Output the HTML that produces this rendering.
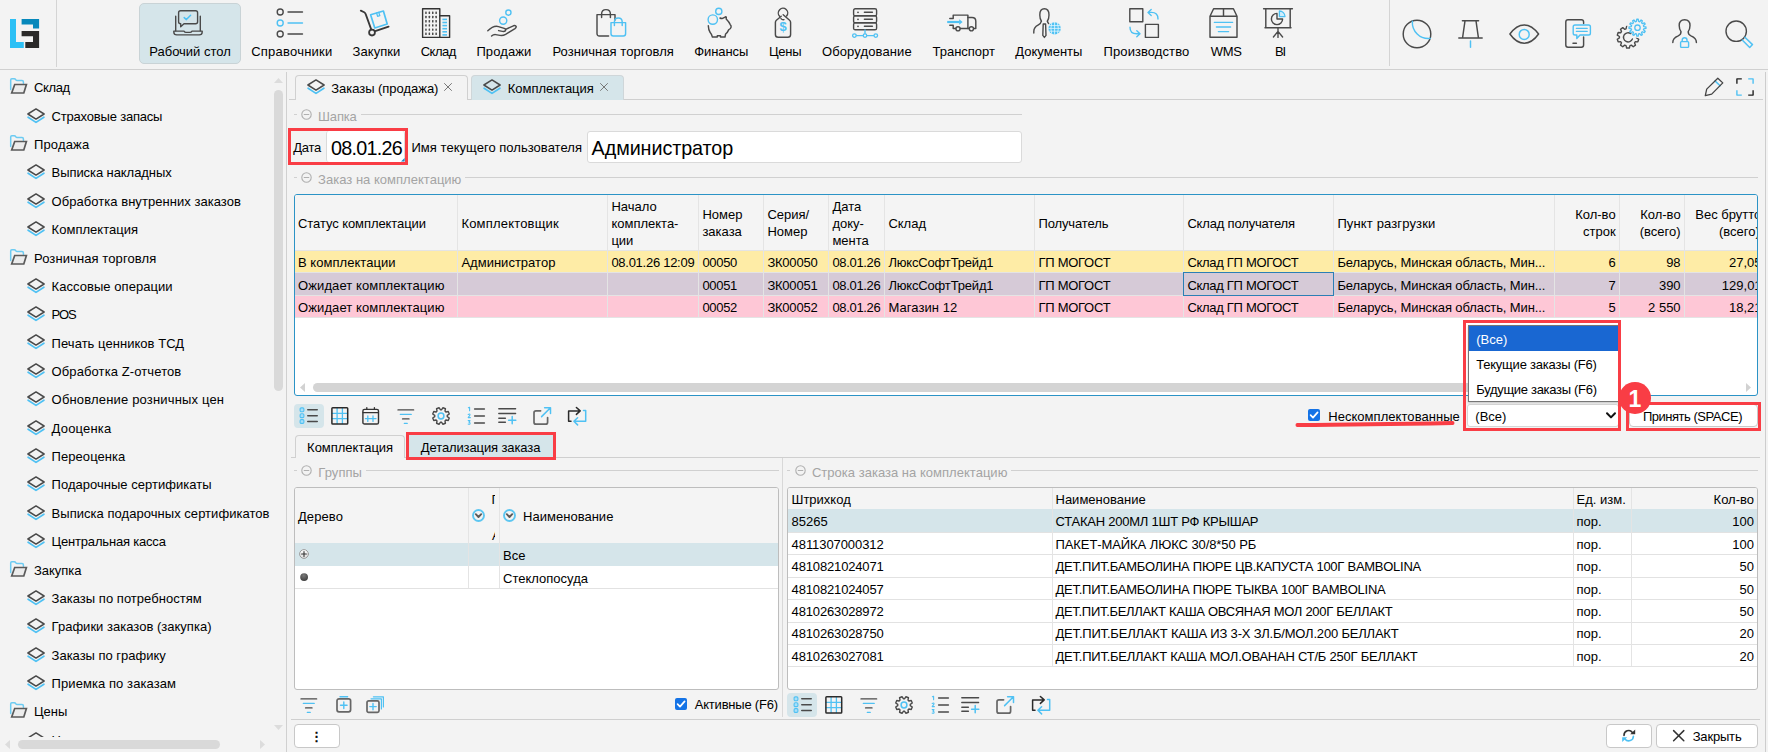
<!DOCTYPE html><html lang="ru"><head><meta charset="utf-8"><title>Комплектация</title><style>
*{box-sizing:border-box;margin:0;padding:0}
html,body{width:1768px;height:752px;overflow:hidden;background:#f3f3f3;}
body{position:relative;font-family:"Liberation Sans","DejaVu Sans",sans-serif;font-size:13px;color:#000;line-height:16px}
div,span.t,span.g,span.b{position:absolute}
span.t,span.g,span.b{white-space:nowrap;line-height:16px}
span.g{color:#a4a4a4}
span.b{font-size:19.75px;line-height:24px}
.hl{background:#d0d0d0;height:1px}
.vl{background:#d0d0d0;width:1px}
.btn{background:#fff;border:1px solid #c8c8c8;border-radius:4px}
.cell{overflow:hidden;white-space:nowrap}
</style></head><body>
<svg style="position:absolute;left:10px;top:19px;overflow:visible" width="29" height="29" viewBox="0 0 29 29" fill="none" stroke-linecap="round" stroke-linejoin="round" stroke="none"><path d="M0 0 H6 V22.9 H13.8 V28.9 H0Z" fill="#2cc0f5"/><path d="M11.6 0 H29.1 V9.6 H23 V5.6 H11.6Z" fill="#0688bb"/><path d="M11.6 11.9 H29.1 V28.9 H15.3 V22.9 H23 V17.3 H11.6Z" fill="#2b2a29"/></svg>
<div style="left:56px;top:0px;width:1px;height:67px;background:#d4d4d4"></div>
<div style="left:1389px;top:0px;width:1px;height:66px;background:#d4d4d4"></div>
<div style="left:0px;top:69px;width:1768px;height:1px;background:#d0d0d0"></div>
<div style="left:139px;top:3px;width:102px;height:61px;background:#d5e5ea;border:1px solid #c9d3d6;border-radius:5px"></div>
<svg style="position:absolute;left:173px;top:8px;overflow:visible" width="30" height="30" viewBox="0 0 30 30" fill="none" stroke-linecap="round" stroke-linejoin="round" >
<path d="M7.6 2.8 H22.6 Q24.6 2.8 24.6 4.8 V13.7 Q24.6 15.7 22.6 15.7 H11 L7.7 18.8 V15.7 H7.6 Q5.6 15.7 5.6 13.7 V4.8 Q5.6 2.8 7.6 2.8Z" stroke="#4a4a4a" stroke-width="1.4"/>
<path d="M11.2 9.6 L13.4 11.6 L17.6 7.2" stroke="#4fc1f3" stroke-width="1.5"/>
<path d="M2.7 8.2 V22.8 M27.3 8.2 V22.8" stroke="#4a4a4a" stroke-width="1.4"/>
<path d="M.8 23.1 H11 Q11.8 24.4 13 24.4 H17 Q18.2 24.4 19 23.1 H29.2 V24 Q29.2 26.9 26.2 26.9 H3.8 Q.8 26.9 .8 24Z" stroke="#4a4a4a" stroke-width="1.4"/></svg>
<span class="t" style="letter-spacing:-0.017px;left:149.3px;top:44px;">Рабочий стол</span>
<svg style="position:absolute;left:276px;top:8px;overflow:visible" width="30" height="30" viewBox="0 0 30 30" fill="none" stroke-linecap="round" stroke-linejoin="round" >
<circle cx="4.2" cy="4" r="3" stroke="#4a4a4a" stroke-width="1.4"/><path d="M12 4H26.5" stroke="#4a4a4a" stroke-width="1.4"/>
<circle cx="4.2" cy="15" r="3" stroke="#4fc1f3" stroke-width="1.4"/><path d="M12 15H26.5" stroke="#4fc1f3" stroke-width="1.4"/>
<circle cx="4.2" cy="26" r="3" stroke="#4a4a4a" stroke-width="1.4"/><path d="M12 26H26.5" stroke="#4a4a4a" stroke-width="1.4"/></svg>
<span class="t" style="letter-spacing:0.230px;left:251.2px;top:44px;">Справочники</span>
<svg style="position:absolute;left:359.8px;top:7.6px;overflow:visible" width="30" height="30" viewBox="0 0 30 30" fill="none" stroke-linecap="round" stroke-linejoin="round" >
<path d="M10.6 6.7 L23.4 3 L27.2 16 L14.8 20 Z" stroke="#4fc1f3" stroke-width="1.7"/>
<path d="M16.6 5 L17.6 8.4 L19.8 7.7 L18.8 4.4" stroke="#4fc1f3" stroke-width="1.3"/>
<path d="M.8 2.6 L4.2 4.2 Q5.2 4.7 5.6 5.9 L11.2 21.4" stroke="#383838" stroke-width="1.8"/>
<circle cx="12" cy="24.6" r="2.9" stroke="#383838" stroke-width="1.8"/>
<path d="M15.2 23.2 L28.6 18.6" stroke="#383838" stroke-width="1.8"/></svg>
<span class="t" style="letter-spacing:0.071px;left:352.5px;top:44px;">Закупки</span>
<svg style="position:absolute;left:421px;top:8px;overflow:visible" width="30" height="30" viewBox="0 0 30 30" fill="none" stroke-linecap="round" stroke-linejoin="round" ><rect x="1.6" y=".8" width="17.2" height="28.6" stroke="#333" stroke-width="1.4"/>
<path d="M18.8 7.8 H28.6 V29.4 H18.8" stroke="#333" stroke-width="1.4"/><rect x="4.2" y="3.6" width="1.5" height="2.4" rx=".5" fill="#4a4a4a"/><rect x="7.6" y="3.6" width="1.5" height="2.4" rx=".5" fill="#4a4a4a"/><rect x="11.0" y="3.6" width="1.5" height="2.4" rx=".5" fill="#4a4a4a"/><rect x="14.4" y="3.6" width="1.5" height="2.4" rx=".5" fill="#4a4a4a"/><rect x="4.2" y="7.8" width="1.5" height="2.4" rx=".5" fill="#4a4a4a"/><rect x="7.6" y="7.8" width="1.5" height="2.4" rx=".5" fill="#4a4a4a"/><rect x="11.0" y="7.8" width="1.5" height="2.4" rx=".5" fill="#4a4a4a"/><rect x="14.4" y="7.8" width="1.5" height="2.4" rx=".5" fill="#4a4a4a"/><rect x="4.2" y="12.0" width="1.5" height="2.4" rx=".5" fill="#4a4a4a"/><rect x="7.6" y="12.0" width="1.5" height="2.4" rx=".5" fill="#4a4a4a"/><rect x="11.0" y="12.0" width="1.5" height="2.4" rx=".5" fill="#4a4a4a"/><rect x="14.4" y="12.0" width="1.5" height="2.4" rx=".5" fill="#4a4a4a"/><rect x="4.2" y="16.2" width="1.5" height="2.4" rx=".5" fill="#4a4a4a"/><rect x="7.6" y="16.2" width="1.5" height="2.4" rx=".5" fill="#4a4a4a"/><rect x="11.0" y="16.2" width="1.5" height="2.4" rx=".5" fill="#4a4a4a"/><rect x="14.4" y="16.2" width="1.5" height="2.4" rx=".5" fill="#4a4a4a"/><rect x="4.2" y="20.4" width="1.5" height="2.4" rx=".5" fill="#4a4a4a"/><rect x="7.6" y="20.4" width="1.5" height="2.4" rx=".5" fill="#4a4a4a"/><rect x="11.0" y="20.4" width="1.5" height="2.4" rx=".5" fill="#4a4a4a"/><rect x="14.4" y="20.4" width="1.5" height="2.4" rx=".5" fill="#4a4a4a"/><rect x="4.2" y="24.6" width="1.5" height="2.4" rx=".5" fill="#4a4a4a"/><rect x="7.6" y="24.6" width="1.5" height="2.4" rx=".5" fill="#4a4a4a"/><rect x="11.0" y="24.6" width="1.5" height="2.4" rx=".5" fill="#4a4a4a"/><rect x="14.4" y="24.6" width="1.5" height="2.4" rx=".5" fill="#4a4a4a"/><path d="M21.4 11.4H26" stroke="#4fc1f3" stroke-width="1.6" stroke-linecap="butt"/><path d="M21.4 14.5H26" stroke="#4fc1f3" stroke-width="1.6" stroke-linecap="butt"/><path d="M21.4 17.6H26" stroke="#4fc1f3" stroke-width="1.6" stroke-linecap="butt"/><path d="M21.4 20.7H26" stroke="#4fc1f3" stroke-width="1.6" stroke-linecap="butt"/><path d="M21.4 23.8H26" stroke="#4fc1f3" stroke-width="1.6" stroke-linecap="butt"/><path d="M21.4 26.9H26" stroke="#4fc1f3" stroke-width="1.6" stroke-linecap="butt"/></svg>
<span class="t" style="letter-spacing:-0.485px;left:420.7px;top:44px;">Склад</span>
<svg style="position:absolute;left:486.8px;top:8px;overflow:visible" width="30" height="30" viewBox="0 0 30 30" fill="none" stroke-linecap="round" stroke-linejoin="round" >
<circle cx="21.4" cy="4.6" r="2.6" stroke="#4fc1f3" stroke-width="1.4"/>
<circle cx="16.2" cy="12.6" r="3.6" stroke="#4fc1f3" stroke-width="1.4"/>
<path d="M.8 22.8 Q6.5 17.2 11.5 18.6 L17.2 20.4 Q19.4 21.2 18.4 22.8 Q17.6 23.8 15.4 23.4 L11.6 22.6" stroke="#4a4a4a" stroke-width="1.45"/>
<path d="M18.6 21.4 L26.4 17.8 Q28.6 17 29.2 18.6 Q29.4 19.6 28 20.6 L18.6 26.4 Q16 27.8 13 27.4 L8.6 26.6 Q6.4 26.4 4.6 28" stroke="#4a4a4a" stroke-width="1.45"/></svg>
<span class="t" style="letter-spacing:0.115px;left:476.4px;top:44px;">Продажи</span>
<svg style="position:absolute;left:596px;top:8px;overflow:visible" width="31" height="30" viewBox="0 0 31 30" fill="none" stroke-linecap="round" stroke-linejoin="round" >
<path d="M12.6 28 H3.4 Q1 28 1 25.6 V6.6 H19 V12" stroke="#4a4a4a" stroke-width="1.45"/>
<path d="M5.6 9.6 V6 Q5.6 1.6 10 1.6 Q14.4 1.6 14.4 6 V9.6" stroke="#4a4a4a" stroke-width="1.45"/>
<path d="M15 14.6 H29.6 V25.8 Q29.6 28 27.4 28 H17.2 Q15 28 15 25.8Z" stroke="#4fc1f3" stroke-width="1.45"/>
<path d="M18.4 17.6 V14 Q18.4 10 22.3 10 Q26.2 10 26.2 14 V17.6" stroke="#4fc1f3" stroke-width="1.45"/></svg>
<span class="t" style="letter-spacing:0.049px;left:552.4px;top:44px;">Розничная торговля</span>
<svg style="position:absolute;left:706.9px;top:8px;overflow:visible" width="28" height="30" viewBox="0 0 28 30" fill="none" stroke-linecap="round" stroke-linejoin="round" >
<circle cx="11.8" cy="3.4" r="3.1" stroke="#4fc1f3" stroke-width="1.4"/>
<circle cx="5.8" cy="11.6" r="4.7" stroke="#4fc1f3" stroke-width="1.4"/>
<path d="M13 10 Q14.4 10.8 15.6 10.4 L18.6 8.8 Q19.4 8.6 19.3 9.6 L19.2 11 Q22.2 14 23.2 16.6 Q24.4 17.6 24.1 19.2 Q23.8 21 21.8 21.6 Q20.6 24.4 18.6 26 L18 29 H13.5 V27.7 H10.3 V29 H5.4 Q4.6 26 3.2 24.6 Q1.4 21.6 1.3 17.7" stroke="#4a4a4a" stroke-width="1.45"/></svg>
<span class="t" style="letter-spacing:-0.097px;left:694.3px;top:44px;">Финансы</span>
<svg style="position:absolute;left:774px;top:8px;overflow:visible" width="18" height="30" viewBox="0 0 18 30" fill="none" stroke-linecap="round" stroke-linejoin="round" >
<path d="M5.6 8.2 A4.7 4.7 0 1 1 12.6 8 M7 10.6 Q8.2 12 10 11.6" stroke="#4a4a4a" stroke-width="1.4"/>
<path d="M9.2 6.8 L15.6 12.2 Q16.6 13 16.6 14.4 V26.4 Q16.6 29.2 13.8 29.2 H4.2 Q1.4 29.2 1.4 26.4 V14.4 Q1.4 13 2.4 12.2 L7.2 8.2" stroke="#4a4a4a" stroke-width="1.45"/>
<text x="9.1" y="23.4" font-size="13" font-weight="bold" text-anchor="middle" fill="#4fc1f3" stroke="none" font-family="Liberation Sans, sans-serif">$</text></svg>
<span class="t" style="letter-spacing:-0.194px;left:768.9px;top:44px;">Цены</span>
<svg style="position:absolute;left:852px;top:8px;overflow:visible" width="27" height="30" viewBox="0 0 27 30" fill="none" stroke-linecap="round" stroke-linejoin="round" ><rect x="1.6" y="0.8" width="23" height="7" rx="1.6" stroke="#4a4a4a" stroke-width="1.4"/><circle cx="6" cy="4.3" r=".9" fill="#4a4a4a"/><path d="M12.4 4.3H20.4" stroke="#4a4a4a" stroke-width="1.4"/><rect x="1.6" y="7.8" width="23" height="7" rx="1.6" stroke="#4a4a4a" stroke-width="1.4"/><circle cx="6" cy="11.3" r=".9" fill="#4a4a4a"/><path d="M12.4 11.3H20.4" stroke="#4a4a4a" stroke-width="1.4"/><rect x="1.6" y="14.8" width="23" height="7" rx="1.6" stroke="#4a4a4a" stroke-width="1.4"/><circle cx="6" cy="18.3" r=".9" fill="#4a4a4a"/><path d="M12.4 18.3H20.4" stroke="#4a4a4a" stroke-width="1.4"/><path d="M13 22 V25.4" stroke="#4fc1f3" stroke-width="1.4"/><path d="M3 27.6 H23" stroke="#4fc1f3" stroke-width="1.4"/>
<circle cx="2.4" cy="27.6" r="1.8" stroke="#4fc1f3" stroke-width="1.3" fill="#f3f3f3"/><circle cx="13" cy="27.6" r="1.8" stroke="#4fc1f3" stroke-width="1.3" fill="#f3f3f3"/><circle cx="23.8" cy="27.6" r="1.8" stroke="#4fc1f3" stroke-width="1.3" fill="#f3f3f3"/></svg>
<span class="t" style="letter-spacing:0.123px;left:821.9px;top:44px;">Оборудование</span>
<svg style="position:absolute;left:947px;top:14px;overflow:visible" width="30" height="18" viewBox="0 0 30 18" fill="none" stroke-linecap="round" stroke-linejoin="round" >
<path d="M.2 8 H12.6" stroke="#4fc1f3" stroke-width="2.2" stroke-linecap="butt"/><path d="M12.2 5.2 L15.6 8 L12.2 10.8Z" fill="#4fc1f3" stroke="none"/>
<path d="M2.8 4.5 H6.2 V1.1 H20.9 V14.4" stroke="#4a4a4a" stroke-width="1.45"/>
<path d="M2.8 11.2 H6.2 V14.4 H8.6 M13.4 14.4 H22" stroke="#4a4a4a" stroke-width="1.45"/>
<path d="M20.9 3.5 H25 Q28.8 3.5 28.8 7.2 V14.4 H26.8" stroke="#4a4a4a" stroke-width="1.45"/>
<circle cx="11" cy="14.8" r="2.1" stroke="#4a4a4a" stroke-width="1.4"/><circle cx="24.4" cy="14.8" r="2.1" stroke="#4a4a4a" stroke-width="1.4"/></svg>
<span class="t" style="letter-spacing:-0.003px;left:932.5px;top:44px;">Транспорт</span>
<svg style="position:absolute;left:1033px;top:8px;overflow:visible" width="28" height="30" viewBox="0 0 28 30" fill="none" stroke-linecap="round" stroke-linejoin="round" >
<path d="M8.4 13.2 Q6.8 10.6 6.8 7 Q6.8 .8 11.4 .8 Q16 .8 16 7 Q16 10.6 14.4 13.2" stroke="#4a4a4a" stroke-width="1.4"/>
<path d="M8.4 13.2 Q8 15.6 5 17.2 Q.8 19.4 .8 23.4 V25" stroke="#4a4a4a" stroke-width="1.4"/>
<path d="M10.2 16 H12.6 L13 27.4 L11.4 29.4 L9.8 27.4 Z" stroke="#4a4a4a" stroke-width="1.4"/>
<path d="M14.4 13.2 Q14.6 14.6 15.6 15.6" stroke="#4a4a4a" stroke-width="1.4"/>
<circle cx="21.6" cy="20.4" r="6.2" fill="#4fc1f3"/>
<path d="M15.6 20.4 H27.6 M21.6 14.4 V26.4 M18.6 15.4 Q17 20.4 18.6 25.4 M24.6 15.4 Q26.2 20.4 24.6 25.4 M16.4 17.6 H26.8 M16.4 23.2 H26.8" stroke="#e6f6fd" stroke-width=".8"/></svg>
<span class="t" style="letter-spacing:0.009px;left:1015.3px;top:44px;">Документы</span>
<svg style="position:absolute;left:1129px;top:8px;overflow:visible" width="30" height="30" viewBox="0 0 30 30" fill="none" stroke-linecap="round" stroke-linejoin="round" >
<rect x=".8" y=".8" width="13" height="13" stroke="#4a4a4a" stroke-width="1.4"/>
<rect x="16.4" y="16.4" width="13" height="13" stroke="#4a4a4a" stroke-width="1.4"/>
<path d="M29 11 Q29 4.4 22.4 4.4 H19.4 M22.2 1.4 L19 4.4 L22.2 7.4" stroke="#4fc1f3" stroke-width="1.4"/>
<path d="M1 19.2 Q1 25.8 7.6 25.8 H10.6 M7.8 22.8 L11 25.8 L7.8 28.8" stroke="#4fc1f3" stroke-width="1.4"/></svg>
<span class="t" style="letter-spacing:0.078px;left:1103.6px;top:44px;">Производство</span>
<svg style="position:absolute;left:1209.4px;top:8px;overflow:visible" width="29" height="30" viewBox="0 0 29 30" fill="none" stroke-linecap="round" stroke-linejoin="round" >
<path d="M1 8.2 L4.6 .8 H24.4 L28 8.2 V29.2 H1 Z M1 8.2 H28 M14.5 .8 V8.2" stroke="#4a4a4a" stroke-width="1.45"/>
<path d="M5.4 14.4 H23.6 M7.4 19 H21.6 M9.4 23.6 H19.6" stroke="#4fc1f3" stroke-width="1.4"/></svg>
<span class="t" style="letter-spacing:-0.360px;left:1210.8px;top:44px;">WMS</span>
<svg style="position:absolute;left:1263px;top:8px;overflow:visible" width="30" height="30" viewBox="0 0 30 30" fill="none" stroke-linecap="round" stroke-linejoin="round" >
<path d="M.6 .8 H29.4 M2.8 .8 V19.6 M27.2 .8 V19.6 M2 19.8 H28" stroke="#4a4a4a" stroke-width="1.45"/>
<path d="M15 20 V29.4 M15 23.4 L10.4 29 M15 23.4 L19.6 29" stroke="#4a4a4a" stroke-width="1.4"/>
<path d="M14 5.4 A5.6 5.6 0 1 0 19.6 11 H14 Z" stroke="#4a4a4a" stroke-width="1.4"/>
<path d="M16.4 3 A5.6 5.6 0 0 1 22 8.6 H16.4 Z" stroke="#4fc1f3" stroke-width="1.3" fill="#cfeefc"/></svg>
<span class="t" style="letter-spacing:-1.098px;left:1275px;top:44px;">BI</span>
<svg style="position:absolute;left:1402px;top:19px;overflow:visible" width="30" height="30" viewBox="0 0 30 30" fill="none" stroke-linecap="round" stroke-linejoin="round" ><circle cx="15" cy="15" r="13.8" stroke="#4a4a4a" stroke-width="1.45"/>
<path d="M10.4 2.2 Q9.8 9.6 15.2 15 Q20.4 20.2 28.4 19.4" stroke="#4fc1f3" stroke-width="1.4"/></svg>
<svg style="position:absolute;left:1458.4px;top:19.6px;overflow:visible" width="25" height="28" viewBox="0 0 25 28" fill="none" stroke-linecap="round" stroke-linejoin="round" ><path d="M4.4 .8 H20.6 M7 .8 L4.6 17.6 M18 .8 L20.4 17.6 M.8 18 H24.2" stroke="#4a4a4a" stroke-width="1.45"/>
<path d="M12.5 21 V27.2" stroke="#4fc1f3" stroke-width="1.45"/></svg>
<svg style="position:absolute;left:1509.2px;top:24px;overflow:visible" width="31" height="20" viewBox="0 0 31 20" fill="none" stroke-linecap="round" stroke-linejoin="round" ><path d="M.9 10 Q7.4 .9 15.2 .9 Q23 .9 29.6 10 Q23 19.2 15.2 19.2 Q7.4 19.2 .9 10Z" stroke="#4a4a4a" stroke-width="1.45"/>
<circle cx="15.2" cy="10.4" r="5" stroke="#4fc1f3" stroke-width="1.45"/></svg>
<svg style="position:absolute;left:1565px;top:19.4px;overflow:visible" width="27" height="29" viewBox="0 0 27 29" fill="none" stroke-linecap="round" stroke-linejoin="round" ><path d="M18.6 4.4 V3 Q18.6 .8 16.4 .8 H3 Q.8 .8 .8 3 V26 Q.8 28.2 3 28.2 H16.4 Q18.6 28.2 18.6 26 V18" stroke="#4a4a4a" stroke-width="1.45"/>
<path d="M8 24.2 H11.4" stroke="#4a4a4a" stroke-width="1.45"/>
<path d="M10 6 H23.6 Q25.4 6 25.4 7.8 V14.2 Q25.4 16 23.6 16 H15 L11.8 19.4 V16 H10 Q8.2 16 8.2 14.2 V7.8 Q8.2 6 10 6Z" stroke="#4fc1f3" stroke-width="1.4"/>
<path d="M11.4 9.4 H22.2 M11.4 12.4 H22.2" stroke="#4fc1f3" stroke-width="1.3"/></svg>
<svg style="position:absolute;left:1616px;top:19px;overflow:visible" width="31" height="30" viewBox="0 0 31 30" fill="none" stroke-linecap="round" stroke-linejoin="round" ><path d="M20.57 18.90 L22.71 20.24 L21.86 22.84 L19.35 22.67 L18.52 23.81 L19.46 26.15 L17.25 27.75 L15.32 26.13 L13.98 26.57 L13.37 29.01 L10.63 29.01 L10.02 26.57 L8.68 26.13 L6.75 27.75 L4.54 26.15 L5.48 23.81 L4.65 22.67 L2.14 22.84 L1.29 20.24 L3.43 18.90 L3.43 17.50 L1.29 16.16 L2.14 13.56 L4.65 13.73 L5.48 12.59 L4.54 10.25 L6.75 8.65 L8.68 10.27 L10.02 9.83 L10.63 7.39 L13.37 7.39 L13.98 9.83 L15.32 10.27 L17.25 8.65 L19.46 10.25 L18.52 12.59 L19.35 13.73 L21.86 13.56 L22.71 16.16 L20.57 17.50Z" stroke="#4a4a4a" stroke-width="1.4"/>
<circle cx="21.5" cy="8.7" r="10.4" fill="#f3f3f3"/>
<path d="M14.8 14.6 A4.6 4.6 0 1 0 16.4 20" stroke="#4a4a4a" stroke-width="1.4"/>
<path d="M27.71 7.62 L29.97 7.99 L29.97 9.41 L27.71 9.78 L27.42 10.87 L29.19 12.32 L28.48 13.55 L26.33 12.74 L25.54 13.53 L26.35 15.68 L25.12 16.39 L23.67 14.62 L22.58 14.91 L22.21 17.17 L20.79 17.17 L20.42 14.91 L19.33 14.62 L17.88 16.39 L16.65 15.68 L17.46 13.53 L16.67 12.74 L14.52 13.55 L13.81 12.32 L15.58 10.87 L15.29 9.78 L13.03 9.41 L13.03 7.99 L15.29 7.62 L15.58 6.53 L13.81 5.08 L14.52 3.85 L16.67 4.66 L17.46 3.87 L16.65 1.72 L17.88 1.01 L19.33 2.78 L20.42 2.49 L20.79 0.23 L22.21 0.23 L22.58 2.49 L23.67 2.78 L25.12 1.01 L26.35 1.72 L25.54 3.87 L26.33 4.66 L28.48 3.85 L29.19 5.08 L27.42 6.53Z" stroke="#4fc1f3" stroke-width="1.3"/><circle cx="21.5" cy="8.7" r="2.7" stroke="#4fc1f3" stroke-width="1.3"/></svg>
<svg style="position:absolute;left:1672.4px;top:19.4px;overflow:visible" width="26" height="29" viewBox="0 0 26 29" fill="none" stroke-linecap="round" stroke-linejoin="round" ><path d="M9 12.6 Q7.2 10.2 7.2 6.6 Q7.2 .8 12.6 .8 Q18 .8 18 6.6 Q18 10.2 16.2 12.6 Q16 15.4 19 16.8 Q24.4 19 24.4 23.4 M9 12.6 Q9.2 15.4 6.2 16.8 Q.8 19 .8 23.4" stroke="#4a4a4a" stroke-width="1.45"/>
<rect x="8.6" y="22.6" width="8" height="5.8" rx=".8" stroke="#4fc1f3" stroke-width="1.4"/><path d="M10.2 22.4 V21 Q10.2 18.8 12.6 18.8 Q15 18.8 15 21 V22.4" stroke="#4fc1f3" stroke-width="1.4"/></svg>
<svg style="position:absolute;left:1725.4px;top:20.4px;overflow:visible" width="28" height="28" viewBox="0 0 28 28" fill="none" stroke-linecap="round" stroke-linejoin="round" ><circle cx="11.2" cy="11.2" r="10.2" stroke="#4a4a4a" stroke-width="1.4"/>
<path d="M19.9 17.2 L27.5 24.6 L24.7 27.5 L17.2 20" stroke="#4fc1f3" stroke-width="1.5"/></svg>
<div style="left:0;top:70px;width:272px;height:667px;overflow:hidden">
<svg style="position:absolute;left:10px;top:8.3px;overflow:visible" width="17" height="16" viewBox="0 0 17 16" fill="none" stroke-linecap="round" stroke-linejoin="round" ><path d="M.7 11.4 V1.9 Q.7 .8 1.8 .8 H4.2 Q5.2 .8 5.7 1.7 Q6.2 2.6 7.2 2.6 H12 Q13.4 2.6 13.4 4 V5.2" stroke="#6ccbf2" stroke-width="1.5"/><path d="M4.7 6.5 H16.4 L13.8 15 H1.7 Z" stroke="#5a5a5a" stroke-width="1.7" fill="#ececec" stroke-linejoin="miter"/></svg>
<span class="t" style="letter-spacing:-0.365px;left:34px;top:10px;">Склад</span>
<svg style="position:absolute;left:27px;top:37.5px;overflow:visible" width="18" height="15" viewBox="0 0 18 15" fill="none" stroke-linecap="round" stroke-linejoin="round" ><path d="M1.1 9.2 L9 14.4 L16.9 9.2" stroke="#4fc1f3" stroke-width="1.7"/><path d="M9 .9 L17.1 6 L9 11.1 L.9 6 Z" stroke="#4a4a4a" stroke-width="1.5"/></svg>
<span class="t" style="letter-spacing:-0.194px;left:51.6px;top:39px;">Страховые запасы</span>
<svg style="position:absolute;left:10px;top:65.0px;overflow:visible" width="17" height="16" viewBox="0 0 17 16" fill="none" stroke-linecap="round" stroke-linejoin="round" ><path d="M.7 11.4 V1.9 Q.7 .8 1.8 .8 H4.2 Q5.2 .8 5.7 1.7 Q6.2 2.6 7.2 2.6 H12 Q13.4 2.6 13.4 4 V5.2" stroke="#6ccbf2" stroke-width="1.5"/><path d="M4.7 6.5 H16.4 L13.8 15 H1.7 Z" stroke="#5a5a5a" stroke-width="1.7" fill="#ececec" stroke-linejoin="miter"/></svg>
<span class="t" style="letter-spacing:0.148px;left:34px;top:67px;">Продажа</span>
<svg style="position:absolute;left:27px;top:94.2px;overflow:visible" width="18" height="15" viewBox="0 0 18 15" fill="none" stroke-linecap="round" stroke-linejoin="round" ><path d="M1.1 9.2 L9 14.4 L16.9 9.2" stroke="#4fc1f3" stroke-width="1.7"/><path d="M9 .9 L17.1 6 L9 11.1 L.9 6 Z" stroke="#4a4a4a" stroke-width="1.5"/></svg>
<span class="t" style="letter-spacing:-0.077px;left:51.6px;top:95px;">Выписка накладных</span>
<svg style="position:absolute;left:27px;top:122.6px;overflow:visible" width="18" height="15" viewBox="0 0 18 15" fill="none" stroke-linecap="round" stroke-linejoin="round" ><path d="M1.1 9.2 L9 14.4 L16.9 9.2" stroke="#4fc1f3" stroke-width="1.7"/><path d="M9 .9 L17.1 6 L9 11.1 L.9 6 Z" stroke="#4a4a4a" stroke-width="1.5"/></svg>
<span class="t" style="letter-spacing:0.043px;left:51.6px;top:124px;">Обработка внутренних заказов</span>
<svg style="position:absolute;left:27px;top:150.9px;overflow:visible" width="18" height="15" viewBox="0 0 18 15" fill="none" stroke-linecap="round" stroke-linejoin="round" ><path d="M1.1 9.2 L9 14.4 L16.9 9.2" stroke="#4fc1f3" stroke-width="1.7"/><path d="M9 .9 L17.1 6 L9 11.1 L.9 6 Z" stroke="#4a4a4a" stroke-width="1.5"/></svg>
<span class="t" style="letter-spacing:0.023px;left:51.6px;top:152px;">Комплектация</span>
<svg style="position:absolute;left:10px;top:178.5px;overflow:visible" width="17" height="16" viewBox="0 0 17 16" fill="none" stroke-linecap="round" stroke-linejoin="round" ><path d="M.7 11.4 V1.9 Q.7 .8 1.8 .8 H4.2 Q5.2 .8 5.7 1.7 Q6.2 2.6 7.2 2.6 H12 Q13.4 2.6 13.4 4 V5.2" stroke="#6ccbf2" stroke-width="1.5"/><path d="M4.7 6.5 H16.4 L13.8 15 H1.7 Z" stroke="#5a5a5a" stroke-width="1.7" fill="#ececec" stroke-linejoin="miter"/></svg>
<span class="t" style="letter-spacing:0.094px;left:34px;top:181px;">Розничная торговля</span>
<svg style="position:absolute;left:27px;top:207.7px;overflow:visible" width="18" height="15" viewBox="0 0 18 15" fill="none" stroke-linecap="round" stroke-linejoin="round" ><path d="M1.1 9.2 L9 14.4 L16.9 9.2" stroke="#4fc1f3" stroke-width="1.7"/><path d="M9 .9 L17.1 6 L9 11.1 L.9 6 Z" stroke="#4a4a4a" stroke-width="1.5"/></svg>
<span class="t" style="letter-spacing:0.047px;left:51.6px;top:209px;">Кассовые операции</span>
<svg style="position:absolute;left:27px;top:236.1px;overflow:visible" width="18" height="15" viewBox="0 0 18 15" fill="none" stroke-linecap="round" stroke-linejoin="round" ><path d="M1.1 9.2 L9 14.4 L16.9 9.2" stroke="#4fc1f3" stroke-width="1.7"/><path d="M9 .9 L17.1 6 L9 11.1 L.9 6 Z" stroke="#4a4a4a" stroke-width="1.5"/></svg>
<span class="t" style="letter-spacing:-1.200px;left:51.6px;top:237px;">POS</span>
<svg style="position:absolute;left:27px;top:264.4px;overflow:visible" width="18" height="15" viewBox="0 0 18 15" fill="none" stroke-linecap="round" stroke-linejoin="round" ><path d="M1.1 9.2 L9 14.4 L16.9 9.2" stroke="#4fc1f3" stroke-width="1.7"/><path d="M9 .9 L17.1 6 L9 11.1 L.9 6 Z" stroke="#4a4a4a" stroke-width="1.5"/></svg>
<span class="t" style="letter-spacing:0.043px;left:51.6px;top:266px;">Печать ценников ТСД</span>
<svg style="position:absolute;left:27px;top:292.8px;overflow:visible" width="18" height="15" viewBox="0 0 18 15" fill="none" stroke-linecap="round" stroke-linejoin="round" ><path d="M1.1 9.2 L9 14.4 L16.9 9.2" stroke="#4fc1f3" stroke-width="1.7"/><path d="M9 .9 L17.1 6 L9 11.1 L.9 6 Z" stroke="#4a4a4a" stroke-width="1.5"/></svg>
<span class="t" style="letter-spacing:0.101px;left:51.6px;top:294px;">Обработка Z-отчетов</span>
<svg style="position:absolute;left:27px;top:321.2px;overflow:visible" width="18" height="15" viewBox="0 0 18 15" fill="none" stroke-linecap="round" stroke-linejoin="round" ><path d="M1.1 9.2 L9 14.4 L16.9 9.2" stroke="#4fc1f3" stroke-width="1.7"/><path d="M9 .9 L17.1 6 L9 11.1 L.9 6 Z" stroke="#4a4a4a" stroke-width="1.5"/></svg>
<span class="t" style="letter-spacing:0.170px;left:51.6px;top:322px;">Обновление розничных цен</span>
<svg style="position:absolute;left:27px;top:349.5px;overflow:visible" width="18" height="15" viewBox="0 0 18 15" fill="none" stroke-linecap="round" stroke-linejoin="round" ><path d="M1.1 9.2 L9 14.4 L16.9 9.2" stroke="#4fc1f3" stroke-width="1.7"/><path d="M9 .9 L17.1 6 L9 11.1 L.9 6 Z" stroke="#4a4a4a" stroke-width="1.5"/></svg>
<span class="t" style="letter-spacing:0.184px;left:51.6px;top:351px;">Дооценка</span>
<svg style="position:absolute;left:27px;top:377.9px;overflow:visible" width="18" height="15" viewBox="0 0 18 15" fill="none" stroke-linecap="round" stroke-linejoin="round" ><path d="M1.1 9.2 L9 14.4 L16.9 9.2" stroke="#4fc1f3" stroke-width="1.7"/><path d="M9 .9 L17.1 6 L9 11.1 L.9 6 Z" stroke="#4a4a4a" stroke-width="1.5"/></svg>
<span class="t" style="letter-spacing:0.061px;left:51.6px;top:379px;">Переоценка</span>
<svg style="position:absolute;left:27px;top:406.3px;overflow:visible" width="18" height="15" viewBox="0 0 18 15" fill="none" stroke-linecap="round" stroke-linejoin="round" ><path d="M1.1 9.2 L9 14.4 L16.9 9.2" stroke="#4fc1f3" stroke-width="1.7"/><path d="M9 .9 L17.1 6 L9 11.1 L.9 6 Z" stroke="#4a4a4a" stroke-width="1.5"/></svg>
<span class="t" style="letter-spacing:0.019px;left:51.6px;top:407px;">Подарочные сертификаты</span>
<svg style="position:absolute;left:27px;top:434.7px;overflow:visible" width="18" height="15" viewBox="0 0 18 15" fill="none" stroke-linecap="round" stroke-linejoin="round" ><path d="M1.1 9.2 L9 14.4 L16.9 9.2" stroke="#4fc1f3" stroke-width="1.7"/><path d="M9 .9 L17.1 6 L9 11.1 L.9 6 Z" stroke="#4a4a4a" stroke-width="1.5"/></svg>
<span class="t" style="letter-spacing:0.038px;left:51.6px;top:436px;">Выписка подарочных сертификатов</span>
<svg style="position:absolute;left:27px;top:463.0px;overflow:visible" width="18" height="15" viewBox="0 0 18 15" fill="none" stroke-linecap="round" stroke-linejoin="round" ><path d="M1.1 9.2 L9 14.4 L16.9 9.2" stroke="#4fc1f3" stroke-width="1.7"/><path d="M9 .9 L17.1 6 L9 11.1 L.9 6 Z" stroke="#4a4a4a" stroke-width="1.5"/></svg>
<span class="t" style="letter-spacing:-0.188px;left:51.6px;top:464px;">Центральная касса</span>
<svg style="position:absolute;left:10px;top:490.6px;overflow:visible" width="17" height="16" viewBox="0 0 17 16" fill="none" stroke-linecap="round" stroke-linejoin="round" ><path d="M.7 11.4 V1.9 Q.7 .8 1.8 .8 H4.2 Q5.2 .8 5.7 1.7 Q6.2 2.6 7.2 2.6 H12 Q13.4 2.6 13.4 4 V5.2" stroke="#6ccbf2" stroke-width="1.5"/><path d="M4.7 6.5 H16.4 L13.8 15 H1.7 Z" stroke="#5a5a5a" stroke-width="1.7" fill="#ececec" stroke-linejoin="miter"/></svg>
<span class="t" style="letter-spacing:-0.039px;left:34px;top:493px;">Закупка</span>
<svg style="position:absolute;left:27px;top:519.8px;overflow:visible" width="18" height="15" viewBox="0 0 18 15" fill="none" stroke-linecap="round" stroke-linejoin="round" ><path d="M1.1 9.2 L9 14.4 L16.9 9.2" stroke="#4fc1f3" stroke-width="1.7"/><path d="M9 .9 L17.1 6 L9 11.1 L.9 6 Z" stroke="#4a4a4a" stroke-width="1.5"/></svg>
<span class="t" style="letter-spacing:0.028px;left:51.6px;top:521px;">Заказы по потребностям</span>
<svg style="position:absolute;left:27px;top:548.1px;overflow:visible" width="18" height="15" viewBox="0 0 18 15" fill="none" stroke-linecap="round" stroke-linejoin="round" ><path d="M1.1 9.2 L9 14.4 L16.9 9.2" stroke="#4fc1f3" stroke-width="1.7"/><path d="M9 .9 L17.1 6 L9 11.1 L.9 6 Z" stroke="#4a4a4a" stroke-width="1.5"/></svg>
<span class="t" style="letter-spacing:0.015px;left:51.6px;top:549px;">Графики заказов (закупка)</span>
<svg style="position:absolute;left:27px;top:576.5px;overflow:visible" width="18" height="15" viewBox="0 0 18 15" fill="none" stroke-linecap="round" stroke-linejoin="round" ><path d="M1.1 9.2 L9 14.4 L16.9 9.2" stroke="#4fc1f3" stroke-width="1.7"/><path d="M9 .9 L17.1 6 L9 11.1 L.9 6 Z" stroke="#4a4a4a" stroke-width="1.5"/></svg>
<span class="t" style="letter-spacing:-0.020px;left:51.6px;top:578px;">Заказы по графику</span>
<svg style="position:absolute;left:27px;top:604.9px;overflow:visible" width="18" height="15" viewBox="0 0 18 15" fill="none" stroke-linecap="round" stroke-linejoin="round" ><path d="M1.1 9.2 L9 14.4 L16.9 9.2" stroke="#4fc1f3" stroke-width="1.7"/><path d="M9 .9 L17.1 6 L9 11.1 L.9 6 Z" stroke="#4a4a4a" stroke-width="1.5"/></svg>
<span class="t" style="letter-spacing:0.073px;left:51.6px;top:606px;">Приемка по заказам</span>
<svg style="position:absolute;left:10px;top:632.4px;overflow:visible" width="17" height="16" viewBox="0 0 17 16" fill="none" stroke-linecap="round" stroke-linejoin="round" ><path d="M.7 11.4 V1.9 Q.7 .8 1.8 .8 H4.2 Q5.2 .8 5.7 1.7 Q6.2 2.6 7.2 2.6 H12 Q13.4 2.6 13.4 4 V5.2" stroke="#6ccbf2" stroke-width="1.5"/><path d="M4.7 6.5 H16.4 L13.8 15 H1.7 Z" stroke="#5a5a5a" stroke-width="1.7" fill="#ececec" stroke-linejoin="miter"/></svg>
<span class="t" style="letter-spacing:0.006px;left:34px;top:634px;">Цены</span>
<svg style="position:absolute;left:27px;top:661.6px;overflow:visible" width="18" height="15" viewBox="0 0 18 15" fill="none" stroke-linecap="round" stroke-linejoin="round" ><path d="M1.1 9.2 L9 14.4 L16.9 9.2" stroke="#4fc1f3" stroke-width="1.7"/><path d="M9 .9 L17.1 6 L9 11.1 L.9 6 Z" stroke="#4a4a4a" stroke-width="1.5"/></svg>
<span class="t" style="letter-spacing:0.017px;left:51.6px;top:663px;">Наценки</span>
</div>
<svg style="position:absolute;left:274px;top:78px;overflow:visible" width="9" height="5" viewBox="0 0 9 5" fill="none" stroke-linecap="round" stroke-linejoin="round" stroke="none"><path d="M0 5 L4.5 0 L9 5Z" fill="#dcdcdc"/></svg>
<div style="left:274px;top:90px;width:9px;height:301px;background:#d9d9d9;border-radius:4.5px"></div>
<svg style="position:absolute;left:274px;top:725px;overflow:visible" width="9" height="5" viewBox="0 0 9 5" fill="none" stroke-linecap="round" stroke-linejoin="round" stroke="none"><path d="M0 0 L4.5 5 L9 0Z" fill="#dcdcdc"/></svg>
<svg style="position:absolute;left:5px;top:740px;overflow:visible" width="5" height="9" viewBox="0 0 5 9" fill="none" stroke-linecap="round" stroke-linejoin="round" stroke="none"><path d="M5 0 L0 4.5 L5 9Z" fill="#dcdcdc"/></svg>
<div style="left:18px;top:740px;width:202px;height:9px;background:#d9d9d9;border-radius:4.5px"></div>
<svg style="position:absolute;left:260px;top:740px;overflow:visible" width="5" height="9" viewBox="0 0 5 9" fill="none" stroke-linecap="round" stroke-linejoin="round" stroke="none"><path d="M0 0 L5 4.5 L0 9Z" fill="#dcdcdc"/></svg>
<div style="left:286px;top:72px;width:1px;height:680px;background:#d0d0d0"></div>
<div style="left:1765px;top:72px;width:1px;height:680px;background:#cdcdcd"></div>
<div style="left:289px;top:99px;width:1474px;height:1px;background:#cfcfcf"></div>
<div style="left:295px;top:75px;width:173px;height:25px;background:#f3f3f3;border:1px solid #d0d0d0;border-bottom:none;border-radius:4px 4px 0 0"></div>
<svg style="position:absolute;left:307px;top:79.4px;overflow:visible" width="18" height="15" viewBox="0 0 18 15" fill="none" stroke-linecap="round" stroke-linejoin="round" ><path d="M1.1 9.2 L9 14.4 L16.9 9.2" stroke="#4fc1f3" stroke-width="1.7"/><path d="M9 .9 L17.1 6 L9 11.1 L.9 6 Z" stroke="#4a4a4a" stroke-width="1.5"/></svg>
<span class="t" style="letter-spacing:-0.029px;left:331.2px;top:81px;">Заказы (продажа)</span>
<svg style="position:absolute;left:444px;top:83.4px;overflow:visible" width="8" height="8" viewBox="0 0 8 8" fill="none" stroke-linecap="round" stroke-linejoin="round" ><path d="M.5 .5 L7.5 7.5 M7.5 .5 L.5 7.5" stroke="#777" stroke-width="1"/></svg>
<div style="left:471px;top:75px;width:153px;height:25px;background:#d5e5ea;border:1px solid #cfd6d9;border-bottom:none;border-radius:4px 4px 0 0"></div>
<svg style="position:absolute;left:483px;top:79.4px;overflow:visible" width="18" height="15" viewBox="0 0 18 15" fill="none" stroke-linecap="round" stroke-linejoin="round" ><path d="M1.1 9.2 L9 14.4 L16.9 9.2" stroke="#4fc1f3" stroke-width="1.7"/><path d="M9 .9 L17.1 6 L9 11.1 L.9 6 Z" stroke="#4a4a4a" stroke-width="1.5"/></svg>
<span class="t" style="letter-spacing:-0.018px;left:507.8px;top:81px;">Комплектация</span>
<svg style="position:absolute;left:599.6px;top:83.4px;overflow:visible" width="8" height="8" viewBox="0 0 8 8" fill="none" stroke-linecap="round" stroke-linejoin="round" ><path d="M.5 .5 L7.5 7.5 M7.5 .5 L.5 7.5" stroke="#777" stroke-width="1"/></svg>
<svg style="position:absolute;left:1704px;top:77px;overflow:visible" width="20" height="20" viewBox="0 0 20 20" fill="none" stroke-linecap="round" stroke-linejoin="round" ><path d="M11 3.9 L16.1 8.8" stroke="#4fc1f3" stroke-width="1.5"/><path d="M1.3 18.6 L2.7 12.1 L13.8 1.2 L18.8 5.9 L7.7 17.1 Z" stroke="#444" stroke-width="1.3"/></svg>
<svg style="position:absolute;left:1736px;top:78px;overflow:visible" width="18" height="18" viewBox="0 0 18 18" fill="none" stroke-linecap="round" stroke-linejoin="round" ><path d="M12.2 .9 H17.1 V5.8 M.9 12.2 V17.1 H5.8" stroke="#4fc1f3" stroke-width="1.4" stroke-linecap="butt"/><path d="M.9 5.8 V.9 H5.8 M12.2 17.1 H17.1 V12.2" stroke="#222" stroke-width="1.4" stroke-linecap="butt"/></svg>
<div style="left:293.6px;top:114px;width:3px;height:1px;background:#d0d0d0"></div>
<svg style="position:absolute;left:301.0px;top:109.4px;overflow:visible" width="11" height="11" viewBox="0 0 11 11" fill="none" stroke-linecap="round" stroke-linejoin="round" ><circle cx="5.5" cy="5.5" r="4.7" stroke="#b0b0b0" stroke-width="1.1"/><path d="M3.2 5.5H7.8" stroke="#b0b0b0" stroke-width="1.1"/></svg>
<span class="g" style="letter-spacing:-0.178px;left:318.1px;top:109px;">Шапка</span>
<div style="left:361px;top:114px;width:661px;height:1px;background:#d0d0d0"></div>
<div style="left:293.6px;top:177px;width:3px;height:1px;background:#d0d0d0"></div>
<svg style="position:absolute;left:301.0px;top:172.4px;overflow:visible" width="11" height="11" viewBox="0 0 11 11" fill="none" stroke-linecap="round" stroke-linejoin="round" ><circle cx="5.5" cy="5.5" r="4.7" stroke="#b0b0b0" stroke-width="1.1"/><path d="M3.2 5.5H7.8" stroke="#b0b0b0" stroke-width="1.1"/></svg>
<span class="g" style="letter-spacing:0.018px;left:318.1px;top:172px;">Заказ на комплектацию</span>
<div style="left:465px;top:177px;width:1293px;height:1px;background:#d0d0d0"></div>
<div style="left:293.8px;top:470px;width:3px;height:1px;background:#d0d0d0"></div>
<svg style="position:absolute;left:301.2px;top:465.4px;overflow:visible" width="11" height="11" viewBox="0 0 11 11" fill="none" stroke-linecap="round" stroke-linejoin="round" ><circle cx="5.5" cy="5.5" r="4.7" stroke="#b0b0b0" stroke-width="1.1"/><path d="M3.2 5.5H7.8" stroke="#b0b0b0" stroke-width="1.1"/></svg>
<span class="g" style="letter-spacing:0.062px;left:318.3px;top:465px;">Группы</span>
<div style="left:366px;top:470px;width:413px;height:1px;background:#d0d0d0"></div>
<div style="left:787.4px;top:470px;width:3px;height:1px;background:#d0d0d0"></div>
<svg style="position:absolute;left:794.8px;top:465.4px;overflow:visible" width="11" height="11" viewBox="0 0 11 11" fill="none" stroke-linecap="round" stroke-linejoin="round" ><circle cx="5.5" cy="5.5" r="4.7" stroke="#b0b0b0" stroke-width="1.1"/><path d="M3.2 5.5H7.8" stroke="#b0b0b0" stroke-width="1.1"/></svg>
<span class="g" style="letter-spacing:0.022px;left:811.9px;top:465px;">Строка заказа на комплектацию</span>
<div style="left:1011px;top:470px;width:747px;height:1px;background:#d0d0d0"></div>
<div style="left:288px;top:128px;width:120px;height:37px;border:3px solid #f93d45"></div>
<span class="t" style="letter-spacing:-0.324px;left:293.3px;top:140px;">Дата</span>
<div style="left:326px;top:131px;width:79.4px;height:31px;background:#fff;border:1px solid #dadada;border-top:none;border-bottom:none;border-radius:3px"></div>
<svg style="position:absolute;left:401.4px;top:158.4px;overflow:visible" width="3.6" height="3.6" viewBox="0 0 3.6 3.6" fill="none" stroke-linecap="round" stroke-linejoin="round" stroke="none"><path d="M3.6 0 V3.6 H0Z" fill="#1e88c9"/></svg>
<span class="b" style="letter-spacing:-0.736px;left:331px;top:136px;">08.01.26</span>
<span class="t" style="letter-spacing:0.031px;left:411.5px;top:140px;">Имя текущего пользователя</span>
<div style="left:587px;top:131px;width:435px;height:32px;background:#fff;border:1px solid #dadada;border-radius:3px"></div>
<span class="b" style="letter-spacing:-0.077px;left:591.6px;top:136px;">Администратор</span>
<div style="left:294px;top:194px;width:1464px;height:202px;background:#fff;border:1px solid #2b93c6;border-radius:3px;overflow:hidden">
<div style="left:0px;top:0px;width:1464px;height:55px;background:#f4f4f4"></div>
<div style="left:0px;top:55px;width:1464px;height:68px;background:#e4e4e4"></div>
<div style="left:0px;top:56px;width:1464px;height:21px;background:#feeca6"></div>
<div style="left:0px;top:78px;width:1464px;height:22px;background:#d6cad7"></div>
<div style="left:0px;top:101px;width:1464px;height:21px;background:#fec7d6"></div>
<div style="left:162px;top:0px;width:1px;height:123px;background:#e4e4e4"></div>
<div style="left:312px;top:0px;width:1px;height:123px;background:#e4e4e4"></div>
<div style="left:403px;top:0px;width:1px;height:123px;background:#e4e4e4"></div>
<div style="left:468px;top:0px;width:1px;height:123px;background:#e4e4e4"></div>
<div style="left:533px;top:0px;width:1px;height:123px;background:#e4e4e4"></div>
<div style="left:589px;top:0px;width:1px;height:123px;background:#e4e4e4"></div>
<div style="left:739px;top:0px;width:1px;height:123px;background:#e4e4e4"></div>
<div style="left:888px;top:0px;width:1px;height:123px;background:#e4e4e4"></div>
<div style="left:1038px;top:0px;width:1px;height:123px;background:#e4e4e4"></div>
<div style="left:1259px;top:0px;width:1px;height:123px;background:#e4e4e4"></div>
<div style="left:1324px;top:0px;width:1px;height:123px;background:#e4e4e4"></div>
<div style="left:1389px;top:0px;width:1px;height:123px;background:#e4e4e4"></div>
<span class="t" style="letter-spacing:-0.074px;left:3px;top:21px;">Статус комплектации</span>
<span class="t" style="letter-spacing:0.190px;left:166.4px;top:21px;">Комплектовщик</span>
<span class="t" style="left:316.4px;top:4px;">Начало</span>
<span class="t" style="left:316.4px;top:21px;">комплекта-</span>
<span class="t" style="left:316.4px;top:38px;">ции</span>
<span class="t" style="left:407.4px;top:12px;">Номер</span>
<span class="t" style="left:407.4px;top:29px;">заказа</span>
<span class="t" style="left:472.4px;top:12px;">Серия/</span>
<span class="t" style="left:472.4px;top:29px;">Номер</span>
<span class="t" style="left:537.4px;top:4px;">Дата</span>
<span class="t" style="left:537.4px;top:21px;">доку-</span>
<span class="t" style="left:537.4px;top:38px;">мента</span>
<span class="t" style="left:593.4px;top:21px;">Склад</span>
<span class="t" style="letter-spacing:-0.106px;left:743.4px;top:21px;">Получатель</span>
<span class="t" style="letter-spacing:-0.173px;left:892.4px;top:21px;">Склад получателя</span>
<span class="t" style="letter-spacing:0.138px;left:1042.4px;top:21px;">Пункт разгрузки</span>
<span class="t" style="right:141.4px;top:12px">Кол-во</span>
<span class="t" style="right:141.4px;top:29px">строк</span>
<span class="t" style="right:76.4px;top:12px">Кол-во</span>
<span class="t" style="right:76.4px;top:29px">(всего)</span>
<span class="t" style="left:1400.3px;top:12px">Вес брутто</span>
<span class="t" style="left:1423.9px;top:29px">(всего)</span>
<span class="t" style="letter-spacing:0.037px;left:3px;top:60px;">В комплектации</span>
<span class="t" style="letter-spacing:0.016px;left:166.4px;top:60px;">Администратор</span>
<span class="t" style="letter-spacing:-0.268px;left:316.4px;top:60px;">08.01.26 12:09</span>
<span class="t" style="letter-spacing:-0.311px;left:407.4px;top:60px;">00050</span>
<span class="t" style="letter-spacing:-0.225px;left:472.4px;top:60px;">ЗК00050</span>
<span class="t" style="letter-spacing:-0.326px;left:537.4px;top:60px;">08.01.26</span>
<span class="t" style="letter-spacing:-0.169px;left:593.4px;top:60px;">ЛюксСофтТрейд1</span>
<span class="t" style="letter-spacing:-0.252px;left:743.4px;top:60px;">ГП МОГОСТ</span>
<span class="t" style="letter-spacing:-0.300px;left:892.4px;top:60px;">Склад ГП МОГОСТ</span>
<span class="t" style="letter-spacing:-0.096px;left:1042.4px;top:60px;">Беларусь, Минская область, Мин...</span>
<span class="t" style="right:141.4px;top:60px">6</span>
<span class="t" style="right:76.4px;top:60px">98</span>
<span class="t" style="right:-4.6px;top:60px">27,05</span>
<span class="t" style="letter-spacing:0.103px;left:3px;top:83px;">Ожидает комплектацию</span>
<span class="t" style="letter-spacing:-0.311px;left:407.4px;top:83px;">00051</span>
<span class="t" style="letter-spacing:-0.225px;left:472.4px;top:83px;">ЗК00051</span>
<span class="t" style="letter-spacing:-0.326px;left:537.4px;top:83px;">08.01.26</span>
<span class="t" style="letter-spacing:-0.169px;left:593.4px;top:83px;">ЛюксСофтТрейд1</span>
<span class="t" style="letter-spacing:-0.252px;left:743.4px;top:83px;">ГП МОГОСТ</span>
<span class="t" style="letter-spacing:-0.300px;left:892.4px;top:83px;">Склад ГП МОГОСТ</span>
<span class="t" style="letter-spacing:-0.096px;left:1042.4px;top:83px;">Беларусь, Минская область, Мин...</span>
<span class="t" style="right:141.4px;top:83px">7</span>
<span class="t" style="right:76.4px;top:83px">390</span>
<span class="t" style="right:-4.6px;top:83px">129,01</span>
<span class="t" style="letter-spacing:0.103px;left:3px;top:105px;">Ожидает комплектацию</span>
<span class="t" style="letter-spacing:-0.311px;left:407.4px;top:105px;">00052</span>
<span class="t" style="letter-spacing:-0.225px;left:472.4px;top:105px;">ЗК00052</span>
<span class="t" style="letter-spacing:-0.326px;left:537.4px;top:105px;">08.01.26</span>
<span class="t" style="letter-spacing:0.078px;left:593.4px;top:105px;">Магазин 12</span>
<span class="t" style="letter-spacing:-0.252px;left:743.4px;top:105px;">ГП МОГОСТ</span>
<span class="t" style="letter-spacing:-0.300px;left:892.4px;top:105px;">Склад ГП МОГОСТ</span>
<span class="t" style="letter-spacing:-0.096px;left:1042.4px;top:105px;">Беларусь, Минская область, Мин...</span>
<span class="t" style="right:141.4px;top:105px">5</span>
<span class="t" style="right:76.4px;top:105px">2 550</span>
<span class="t" style="right:-4.6px;top:105px">18,21</span>
<div style="left:888px;top:77px;width:151px;height:24px;border:1px solid #2b7fb5"></div>
<svg style="position:absolute;left:5.399999999999977px;top:188.39999999999998px;overflow:visible" width="5" height="9" viewBox="0 0 5 9" fill="none" stroke-linecap="round" stroke-linejoin="round" stroke="none"><path d="M5 0 L0 4.5 L5 9Z" fill="#d2d2d2"/></svg>
<div style="left:18px;top:188px;width:1200px;height:9px;background:#d4d4d4;border-radius:4.5px"></div>
<svg style="position:absolute;left:1451.4px;top:188.39999999999998px;overflow:visible" width="5" height="9" viewBox="0 0 5 9" fill="none" stroke-linecap="round" stroke-linejoin="round" stroke="none"><path d="M0 0 L5 4.5 L0 9Z" fill="#d2d2d2"/></svg>
</div>
<div style="left:294px;top:404px;width:30px;height:24px;background:#d5e5ea;border-radius:4px"></div>
<svg style="position:absolute;left:299px;top:407.4px;overflow:visible" width="19" height="18" viewBox="0 0 19 18" fill="none" stroke-linecap="round" stroke-linejoin="round" ><rect x="1.1" y="0.9" width="3.8" height="3.8" rx="1.2" stroke="#4fc1f3" stroke-width="1.1" fill="#a9dff8"/><path d="M8.8 2.8H18.2" stroke="#4a4a4a" stroke-width="1.6"/><rect x="1.1" y="6.8" width="3.8" height="3.8" rx="1.2" stroke="#4fc1f3" stroke-width="1.1" fill="#a9dff8"/><path d="M8.8 8.7H18.2" stroke="#4a4a4a" stroke-width="1.6"/><rect x="1.1" y="12.6" width="3.8" height="3.8" rx="1.2" stroke="#4fc1f3" stroke-width="1.1" fill="#a9dff8"/><path d="M8.8 14.5H18.2" stroke="#4a4a4a" stroke-width="1.6"/></svg>
<svg style="position:absolute;left:330.6px;top:407.2px;overflow:visible" width="18" height="18" viewBox="0 0 18 18" fill="none" stroke-linecap="round" stroke-linejoin="round" ><path d="M6.1 1 V16.6 M11.4 1 V16.6 M1 6.3 H16.6 M1 11.7 H16.6" stroke="#4fc1f3" stroke-width="1.3"/><rect x=".9" y=".8" width="15.8" height="16.2" rx=".8" stroke="#2a2a2a" stroke-width="1.5"/></svg>
<svg style="position:absolute;left:361.8px;top:407.2px;overflow:visible" width="18" height="18" viewBox="0 0 18 18" fill="none" stroke-linecap="round" stroke-linejoin="round" ><rect x=".9" y="2.4" width="15.6" height="14.6" rx="1.6" stroke="#333" stroke-width="1.4"/><path d="M4.8 .6 V2.4 M12.4 .6 V2.4" stroke="#333" stroke-width="1.3"/><path d="M1 5.6 H16.4" stroke="#333" stroke-width="1.2"/>
<path d="M3.4 11.6 H14 M5.8 8.8 V14.4 M11 8.8 V14.4" stroke="#4fc1f3" stroke-width="1.3"/></svg>
<svg style="position:absolute;left:396.6px;top:409.4px;overflow:visible" width="18" height="16" viewBox="0 0 18 16" fill="none" stroke-linecap="round" stroke-linejoin="round" ><path d="M1 .9 H16.6" stroke="#4a4a4a" stroke-width="1.4"/><path d="M3.4 5.4 H14.2" stroke="#4fc1f3" stroke-width="1.4"/><path d="M5.6 9.9 H12" stroke="#4a4a4a" stroke-width="1.4"/><path d="M7.4 14.4 H10.2" stroke="#4fc1f3" stroke-width="1.4"/></svg>
<svg style="position:absolute;left:431.8px;top:407.2px;overflow:visible" width="18" height="18" viewBox="0 0 18 18" fill="none" stroke-linecap="round" stroke-linejoin="round" ><path d="M15.27 9.64 L17.27 10.98 L16.25 13.44 L13.89 12.98 L12.98 13.89 L13.44 16.25 L10.98 17.27 L9.64 15.27 L8.36 15.27 L7.02 17.27 L4.56 16.25 L5.02 13.89 L4.11 12.98 L1.75 13.44 L0.73 10.98 L2.73 9.64 L2.73 8.36 L0.73 7.02 L1.75 4.56 L4.11 5.02 L5.02 4.11 L4.56 1.75 L7.02 0.73 L8.36 2.73 L9.64 2.73 L10.98 0.73 L13.44 1.75 L12.98 4.11 L13.89 5.02 L16.25 4.56 L17.27 7.02 L15.27 8.36Z" stroke="#4a4a4a" stroke-width="1.4"/><circle cx="9" cy="9" r="2.9" stroke="#4fc1f3" stroke-width="1.5"/></svg>
<svg style="position:absolute;left:467px;top:407.4px;overflow:visible" width="18" height="18" viewBox="0 0 18 18" fill="none" stroke-linecap="round" stroke-linejoin="round" ><path d="M7.6 2.1H17.4" stroke="#4a4a4a" stroke-width="1.5"/><path d="M7.6 9.1H17.4" stroke="#4a4a4a" stroke-width="1.5"/><path d="M7.6 15.9H17.4" stroke="#4a4a4a" stroke-width="1.5"/><path d="M1.4 .8 L2.6 .2 V3.8 M1.2 7.4 Q3.2 6.4 3 8 L1.2 10.6 H3.4 M1.2 13.6 H3 L2 15.2 Q3.4 15.4 3 16.8 Q2.4 17.6 1.2 17" stroke="#4fc1f3" stroke-width="1.1"/></svg>
<svg style="position:absolute;left:497.8px;top:408px;overflow:visible" width="18" height="18" viewBox="0 0 18 18" fill="none" stroke-linecap="round" stroke-linejoin="round" ><path d="M.8 .7 H17.6 M.8 5.5 H17.6 M.8 10.2 H7.4 M.8 14.3 H7.4" stroke="#4a4a4a" stroke-width="1.4"/><path d="M14.2 8.6 V15.8 M10.6 12.2 H17.8" stroke="#4fc1f3" stroke-width="1.5"/></svg>
<svg style="position:absolute;left:532.8px;top:407.2px;overflow:visible" width="18" height="18" viewBox="0 0 18 18" fill="none" stroke-linecap="round" stroke-linejoin="round" ><path d="M7.6 3.8 H3 Q1 3.8 1 5.8 V15.2 Q1 17.2 3 17.2 H12.6 Q14.6 17.2 14.6 15.2 V10.6" stroke="#666" stroke-width="1.7"/>
<path d="M8.6 9.6 L17.2 1 M11.6 .7 H17.5 V6.6" stroke="#4fc1f3" stroke-width="1.5"/></svg>
<svg style="position:absolute;left:567px;top:407px;overflow:visible" width="20" height="19" viewBox="0 0 20 19" fill="none" stroke-linecap="round" stroke-linejoin="round" ><path d="M4 14.3 H1.6 V3.9 H12.8 M9.4 .5 L13.2 3.9 L9.4 7.4" stroke="#2a2a2a" stroke-width="1.5"/>
<path d="M16.5 3.4 H18.7 V14.3 H7.2 M10.6 10.7 L6.9 14.3 L10.6 17.9" stroke="#4fc1f3" stroke-width="1.5"/></svg>
<div style="left:1308.2px;top:409px;width:12px;height:12px;background:#1473e6;border-radius:2px"></div>
<svg style="position:absolute;left:1308.2px;top:409px;overflow:visible" width="12" height="12" viewBox="0 0 12 12" fill="none" stroke-linecap="round" stroke-linejoin="round" ><path d="M2.6 6.2 L5 8.6 L9.6 3.4" stroke="#fff" stroke-width="1.7"/></svg>
<span class="t" style="letter-spacing:0.051px;left:1328.2px;top:409px;">Нескомплектованные</span>
<svg style="position:absolute;left:1294px;top:419px;overflow:visible" width="164" height="10" viewBox="0 0 164 10" fill="none" stroke-linecap="round" stroke-linejoin="round" ><path d="M3.4 6 Q70 5.6 158.6 4" stroke="#f93d45" stroke-width="3.8"/></svg>
<div style="left:1467px;top:403.6px;width:151.6px;height:23.8px;background:#fff;border:1px solid #d6d6d6;border-radius:3px"></div>
<span class="t" style="left:1475.3px;top:409px;">(Все)</span>
<svg style="position:absolute;left:1605.6px;top:411.6px;overflow:visible" width="10" height="7" viewBox="0 0 10 7" fill="none" stroke-linecap="round" stroke-linejoin="round" ><path d="M1 1.2 L5 5.4 L9 1.2" stroke="#111" stroke-width="2"/></svg>
<div style="left:1468.4px;top:324.8px;width:150.2px;height:77.2px;background:#fff;border:1px solid #767676;box-shadow:0 1px 2px rgba(0,0,0,.2)"></div>
<div style="left:1469.4px;top:325.8px;width:148.2px;height:25px;background:#1967d2"></div>
<span class="t" style="left:1476.2px;top:332px;color:#fff">(Все)</span>
<span class="t" style="letter-spacing:-0.215px;left:1476.2px;top:357px;">Текущие заказы (F6)</span>
<span class="t" style="letter-spacing:-0.300px;left:1476.2px;top:382px;">Будущие заказы (F6)</span>
<div style="left:1463px;top:320.2px;width:157.8px;height:110.8px;border:3px solid #f93d45"></div>
<div class="btn" style="left:1628.6px;top:404.4px;width:129.2px;height:22.6px;"></div>
<span class="t" style="letter-spacing:-0.471px;left:1642.9px;top:409px;">Принять (SPACE)</span>
<div style="left:1626px;top:401.6px;width:135.2px;height:29.4px;border:3px solid #f93d45"></div>
<div style="left:1619.2px;top:382.4px;width:31.6px;height:31.6px;background:#f93d45;border-radius:50%"></div>
<span class="t" style="left:1619.2px;top:385.6px;width:31.6px;text-align:center;color:#fff;font-weight:bold;font-size:23px;line-height:26px">1</span>
<div style="left:291px;top:457px;width:1469px;height:1px;background:#cfcfcf"></div>
<div style="left:295px;top:435px;width:110.4px;height:23px;background:#f3f3f3;border:1px solid #d0d0d0;border-bottom:none;border-radius:4px 4px 0 0"></div>
<span class="t" style="letter-spacing:-0.018px;left:307.1px;top:440px;">Комплектация</span>
<div style="left:407px;top:434px;width:148px;height:24px;background:#d5e5ea"></div>
<span class="t" style="letter-spacing:-0.110px;left:420.8px;top:440px;">Детализация заказа</span>
<div style="left:406px;top:432px;width:150px;height:28px;border:3px solid #f93d45"></div>
<div style="left:294px;top:487px;width:485px;height:203px;background:#fff;border:1px solid #bdbdbd;border-radius:3px;overflow:hidden">
<div style="left:0px;top:0px;width:485px;height:55px;background:#f4f4f4"></div>
<div style="left:0px;top:55px;width:485px;height:23px;background:#d5e5ea"></div>
<div style="left:0px;top:100px;width:485px;height:1px;background:#e2e2e2"></div>
<div style="left:173px;top:0px;width:1px;height:100px;background:#e4e4e4"></div>
<div style="left:204px;top:0px;width:1px;height:100px;background:#e4e4e4"></div>
<span class="t" style="letter-spacing:0.103px;left:2.9px;top:21px;">Дерево</span>
<svg style="position:absolute;left:177px;top:20.9px;overflow:visible" width="13" height="13" viewBox="0 0 13 13" fill="none" stroke-linecap="round" stroke-linejoin="round" ><circle cx="6.5" cy="6.5" r="5.5" stroke="#5cc6f1" stroke-width="1.9"/><path d="M3.8 5.2 L6.5 8 L9.2 5.2" stroke="#5a5a5a" stroke-width="1.9"/></svg>
<svg style="position:absolute;left:208px;top:20.9px;overflow:visible" width="13" height="13" viewBox="0 0 13 13" fill="none" stroke-linecap="round" stroke-linejoin="round" ><circle cx="6.5" cy="6.5" r="5.5" stroke="#5cc6f1" stroke-width="1.9"/><path d="M3.8 5.2 L6.5 8 L9.2 5.2" stroke="#5a5a5a" stroke-width="1.9"/></svg>
<span class="t" style="letter-spacing:0.015px;left:228.1px;top:21px;">Наименование</span>
<div class="cell" style="left:195px;top:0;width:5.2px;height:55px"><span class="t" style="left:1.5px;top:4px">Группа</span><span class="t" style="left:2px;top:40px">Активная</span></div>
<span class="t" style="left:208.1px;top:60px;">Все</span>
<span class="t" style="left:208.1px;top:83px;">Стеклопосуда</span>
<svg style="position:absolute;left:4px;top:61.2px;overflow:visible" width="10" height="10" viewBox="0 0 10 10" fill="none" stroke-linecap="round" stroke-linejoin="round" ><defs><linearGradient id="pg" x1="0" y1="0" x2="0" y2="1"><stop offset="0" stop-color="#fff"/><stop offset="1" stop-color="#dcdcdc"/></linearGradient></defs><circle cx="5" cy="5" r="4.4" stroke="#9a9a9a" stroke-width="1" fill="url(#pg)"/><path d="M2.6 5H7.4M5 2.6V7.4" stroke="#333" stroke-width="1.1"/></svg>
<svg style="position:absolute;left:5px;top:84.8px;overflow:visible" width="9" height="9" viewBox="0 0 9 9" fill="none" stroke-linecap="round" stroke-linejoin="round" stroke="none"><defs><radialGradient id="bg1" cx=".45" cy=".3" r=".75"><stop offset="0" stop-color="#7a7a7a"/><stop offset="1" stop-color="#3a3a3a"/></radialGradient></defs><circle cx="4.1" cy="4.1" r="3.9" fill="url(#bg1)"/></svg>
</div>
<svg style="position:absolute;left:300px;top:697.6px;overflow:visible" width="18" height="16" viewBox="0 0 18 16" fill="none" stroke-linecap="round" stroke-linejoin="round" ><path d="M1 .9 H16.6" stroke="#4a4a4a" stroke-width="1.4"/><path d="M3.4 5.4 H14.2" stroke="#4fc1f3" stroke-width="1.4"/><path d="M5.6 9.9 H12" stroke="#4a4a4a" stroke-width="1.4"/><path d="M7.4 14.4 H10.2" stroke="#4fc1f3" stroke-width="1.4"/></svg>
<svg style="position:absolute;left:335.8px;top:696px;overflow:visible" width="16" height="17" viewBox="0 0 16 17" fill="none" stroke-linecap="round" stroke-linejoin="round" ><path d="M4 .8 H11.6" stroke="#4fc1f3" stroke-width="1.4"/><rect x="1" y="2.8" width="13.6" height="13" rx="2" stroke="#666" stroke-width="1.7"/><path d="M7.8 6 V12.6 M4.5 9.3 H11.1" stroke="#4fc1f3" stroke-width="1.4"/></svg>
<svg style="position:absolute;left:366px;top:695.8px;overflow:visible" width="18" height="17" viewBox="0 0 18 17" fill="none" stroke-linecap="round" stroke-linejoin="round" ><path d="M5 2.8 H15.4 V13 M7.4 .8 H17.4 V11" stroke="#4fc1f3" stroke-width="1.2"/><rect x="1" y="4.8" width="12" height="11.6" rx="1.6" stroke="#666" stroke-width="1.7" fill="#f3f3f3"/><path d="M7 7.4 V13.8 M3.8 10.6 H10.2" stroke="#4fc1f3" stroke-width="1.4"/></svg>
<div style="left:675px;top:698.4px;width:12px;height:12px;background:#1473e6;border-radius:2px"></div>
<svg style="position:absolute;left:675px;top:698.4px;overflow:visible" width="12" height="12" viewBox="0 0 12 12" fill="none" stroke-linecap="round" stroke-linejoin="round" ><path d="M2.6 6.2 L5 8.6 L9.6 3.4" stroke="#fff" stroke-width="1.7"/></svg>
<span class="t" style="letter-spacing:-0.218px;left:694.8px;top:697px;">Активные (F6)</span>
<div style="left:782px;top:458px;width:1px;height:259px;background:#d8d8d8"></div>
<div style="left:787px;top:487px;width:971px;height:203px;background:#fff;border:1px solid #bdbdbd;border-radius:3px;overflow:hidden">
<div style="left:0px;top:0px;width:971px;height:21px;background:#f4f4f4"></div>
<div style="left:0px;top:21px;width:971px;height:23px;background:#d5e5ea"></div>
<div style="left:0px;top:44px;width:971px;height:1px;background:#e2e2e2"></div>
<div style="left:0px;top:66px;width:971px;height:1px;background:#e2e2e2"></div>
<div style="left:0px;top:89px;width:971px;height:1px;background:#e2e2e2"></div>
<div style="left:0px;top:111px;width:971px;height:1px;background:#e2e2e2"></div>
<div style="left:0px;top:134px;width:971px;height:1px;background:#e2e2e2"></div>
<div style="left:0px;top:156px;width:971px;height:1px;background:#e2e2e2"></div>
<div style="left:0px;top:178px;width:971px;height:1px;background:#e2e2e2"></div>
<div style="left:264px;top:0px;width:1px;height:178px;background:#e4e4e4"></div>
<div style="left:785px;top:0px;width:1px;height:178px;background:#e4e4e4"></div>
<div style="left:843px;top:0px;width:1px;height:178px;background:#e4e4e4"></div>
<span class="t" style="left:3.5px;top:4px;">Штрихкод</span>
<span class="t" style="left:267.5px;top:4px;">Наименование</span>
<span class="t" style="left:788.5px;top:4px;">Ед. изм.</span>
<span class="t" style="right:3.0px;top:4px">Кол-во</span>
<span class="t" style="left:3.5px;top:26px;">85265</span>
<span class="t" style="letter-spacing:-0.230px;left:267.5px;top:26px;">СТАКАН 200МЛ 1ШТ РФ КРЫШАР</span>
<span class="t" style="left:788.5px;top:26px;">пор.</span>
<span class="t" style="right:3.0px;top:26px">100</span>
<span class="t" style="letter-spacing:-0.079px;left:3.6px;top:49px;">4811307000312</span>
<span class="t" style="letter-spacing:-0.084px;left:267.5px;top:49px;">ПАКЕТ-МАЙКА ЛЮКС 30/8*50 РБ</span>
<span class="t" style="left:788.5px;top:49px;">пор.</span>
<span class="t" style="right:3.0px;top:49px">100</span>
<span class="t" style="letter-spacing:-0.154px;left:3.6px;top:71px;">4810821024071</span>
<span class="t" style="letter-spacing:-0.261px;left:267.5px;top:71px;">ДЕТ.ПИТ.БАМБОЛИНА ПЮРЕ ЦВ.КАПУСТА 100Г BAMBOLINA</span>
<span class="t" style="left:788.5px;top:71px;">пор.</span>
<span class="t" style="right:3.0px;top:71px">50</span>
<span class="t" style="letter-spacing:-0.154px;left:3.6px;top:94px;">4810821024057</span>
<span class="t" style="letter-spacing:-0.261px;left:267.5px;top:94px;">ДЕТ.ПИТ.БАМБОЛИНА ПЮРЕ ТЫКВА 100Г BAMBOLINA</span>
<span class="t" style="left:788.5px;top:94px;">пор.</span>
<span class="t" style="right:3.0px;top:94px">50</span>
<span class="t" style="letter-spacing:-0.154px;left:3.6px;top:116px;">4810263028972</span>
<span class="t" style="letter-spacing:-0.307px;left:267.5px;top:116px;">ДЕТ.ПИТ.БЕЛЛАКТ КАША ОВСЯНАЯ МОЛ 200Г БЕЛЛАКТ</span>
<span class="t" style="left:788.5px;top:116px;">пор.</span>
<span class="t" style="right:3.0px;top:116px">50</span>
<span class="t" style="letter-spacing:-0.154px;left:3.6px;top:138px;">4810263028750</span>
<span class="t" style="letter-spacing:-0.192px;left:267.5px;top:138px;">ДЕТ.ПИТ.БЕЛЛАКТ КАША ИЗ 3-Х ЗЛ.Б/МОЛ.200 БЕЛЛАКТ</span>
<span class="t" style="left:788.5px;top:138px;">пор.</span>
<span class="t" style="right:3.0px;top:138px">20</span>
<span class="t" style="letter-spacing:-0.154px;left:3.6px;top:161px;">4810263027081</span>
<span class="t" style="letter-spacing:-0.232px;left:267.5px;top:161px;">ДЕТ.ПИТ.БЕЛЛАКТ КАША МОЛ.ОВАНАН СТ/Б 250Г БЕЛЛАКТ</span>
<span class="t" style="left:788.5px;top:161px;">пор.</span>
<span class="t" style="right:3.0px;top:161px">20</span>
</div>
<div style="left:787.4px;top:693px;width:30px;height:24px;background:#d5e5ea;border-radius:4px"></div>
<svg style="position:absolute;left:793.2px;top:696.2px;overflow:visible" width="19" height="18" viewBox="0 0 19 18" fill="none" stroke-linecap="round" stroke-linejoin="round" ><rect x="1.1" y="0.9" width="3.8" height="3.8" rx="1.2" stroke="#4fc1f3" stroke-width="1.1" fill="#a9dff8"/><path d="M8.8 2.8H18.2" stroke="#4a4a4a" stroke-width="1.6"/><rect x="1.1" y="6.8" width="3.8" height="3.8" rx="1.2" stroke="#4fc1f3" stroke-width="1.1" fill="#a9dff8"/><path d="M8.8 8.7H18.2" stroke="#4a4a4a" stroke-width="1.6"/><rect x="1.1" y="12.6" width="3.8" height="3.8" rx="1.2" stroke="#4fc1f3" stroke-width="1.1" fill="#a9dff8"/><path d="M8.8 14.5H18.2" stroke="#4a4a4a" stroke-width="1.6"/></svg>
<svg style="position:absolute;left:824.8px;top:696px;overflow:visible" width="18" height="18" viewBox="0 0 18 18" fill="none" stroke-linecap="round" stroke-linejoin="round" ><path d="M6.1 1 V16.6 M11.4 1 V16.6 M1 6.3 H16.6 M1 11.7 H16.6" stroke="#4fc1f3" stroke-width="1.3"/><rect x=".9" y=".8" width="15.8" height="16.2" rx=".8" stroke="#2a2a2a" stroke-width="1.5"/></svg>
<svg style="position:absolute;left:860px;top:698.2px;overflow:visible" width="18" height="16" viewBox="0 0 18 16" fill="none" stroke-linecap="round" stroke-linejoin="round" ><path d="M1 .9 H16.6" stroke="#4a4a4a" stroke-width="1.4"/><path d="M3.4 5.4 H14.2" stroke="#4fc1f3" stroke-width="1.4"/><path d="M5.6 9.9 H12" stroke="#4a4a4a" stroke-width="1.4"/><path d="M7.4 14.4 H10.2" stroke="#4fc1f3" stroke-width="1.4"/></svg>
<svg style="position:absolute;left:895.2px;top:696px;overflow:visible" width="18" height="18" viewBox="0 0 18 18" fill="none" stroke-linecap="round" stroke-linejoin="round" ><path d="M15.27 9.64 L17.27 10.98 L16.25 13.44 L13.89 12.98 L12.98 13.89 L13.44 16.25 L10.98 17.27 L9.64 15.27 L8.36 15.27 L7.02 17.27 L4.56 16.25 L5.02 13.89 L4.11 12.98 L1.75 13.44 L0.73 10.98 L2.73 9.64 L2.73 8.36 L0.73 7.02 L1.75 4.56 L4.11 5.02 L5.02 4.11 L4.56 1.75 L7.02 0.73 L8.36 2.73 L9.64 2.73 L10.98 0.73 L13.44 1.75 L12.98 4.11 L13.89 5.02 L16.25 4.56 L17.27 7.02 L15.27 8.36Z" stroke="#4a4a4a" stroke-width="1.4"/><circle cx="9" cy="9" r="2.9" stroke="#4fc1f3" stroke-width="1.5"/></svg>
<svg style="position:absolute;left:930.6px;top:696.2px;overflow:visible" width="18" height="18" viewBox="0 0 18 18" fill="none" stroke-linecap="round" stroke-linejoin="round" ><path d="M7.6 2.1H17.4" stroke="#4a4a4a" stroke-width="1.5"/><path d="M7.6 9.1H17.4" stroke="#4a4a4a" stroke-width="1.5"/><path d="M7.6 15.9H17.4" stroke="#4a4a4a" stroke-width="1.5"/><path d="M1.4 .8 L2.6 .2 V3.8 M1.2 7.4 Q3.2 6.4 3 8 L1.2 10.6 H3.4 M1.2 13.6 H3 L2 15.2 Q3.4 15.4 3 16.8 Q2.4 17.6 1.2 17" stroke="#4fc1f3" stroke-width="1.1"/></svg>
<svg style="position:absolute;left:961px;top:696.8px;overflow:visible" width="18" height="18" viewBox="0 0 18 18" fill="none" stroke-linecap="round" stroke-linejoin="round" ><path d="M.8 .7 H17.6 M.8 5.5 H17.6 M.8 10.2 H7.4 M.8 14.3 H7.4" stroke="#4a4a4a" stroke-width="1.4"/><path d="M14.2 8.6 V15.8 M10.6 12.2 H17.8" stroke="#4fc1f3" stroke-width="1.5"/></svg>
<svg style="position:absolute;left:996px;top:696px;overflow:visible" width="18" height="18" viewBox="0 0 18 18" fill="none" stroke-linecap="round" stroke-linejoin="round" ><path d="M7.6 3.8 H3 Q1 3.8 1 5.8 V15.2 Q1 17.2 3 17.2 H12.6 Q14.6 17.2 14.6 15.2 V10.6" stroke="#666" stroke-width="1.7"/>
<path d="M8.6 9.6 L17.2 1 M11.6 .7 H17.5 V6.6" stroke="#4fc1f3" stroke-width="1.5"/></svg>
<svg style="position:absolute;left:1030.6px;top:695.8px;overflow:visible" width="20" height="19" viewBox="0 0 20 19" fill="none" stroke-linecap="round" stroke-linejoin="round" ><path d="M4 14.3 H1.6 V3.9 H12.8 M9.4 .5 L13.2 3.9 L9.4 7.4" stroke="#2a2a2a" stroke-width="1.5"/>
<path d="M16.5 3.4 H18.7 V14.3 H7.2 M10.6 10.7 L6.9 14.3 L10.6 17.9" stroke="#4fc1f3" stroke-width="1.5"/></svg>
<div style="left:291px;top:719px;width:1469px;height:1px;background:#cfcfcf"></div>
<div class="btn" style="left:294px;top:724.2px;width:46px;height:23.4px;"></div>
<span class="t" style="left:306.6px;top:727.6px;width:20px;text-align:center;font-family:'DejaVu Sans',sans-serif;font-size:13px;line-height:18px;-webkit-text-stroke:.55px #000">⋮</span>
<div class="btn" style="left:1606px;top:724px;width:46px;height:24px;"></div>
<svg style="position:absolute;left:1621.8px;top:729.2px;overflow:visible" width="14" height="14" viewBox="0 0 14 14" fill="none" stroke-linecap="round" stroke-linejoin="round" ><path d="M2 6.4 A4.7 4.7 0 0 1 10.4 3.4" stroke="#333" stroke-width="1.6"/><path d="M13.2 .4 V5.2 H8.2Z" fill="#333" stroke="none"/>
<path d="M11.4 7.2 A4.7 4.7 0 0 1 3 10" stroke="#4fc1f3" stroke-width="1.6"/><path d="M.2 13 V8.2 H5.2Z" fill="#4fc1f3" stroke="none"/></svg>
<div class="btn" style="left:1656.2px;top:724.2px;width:101.6px;height:23.4px;"></div>
<svg style="position:absolute;left:1673.2px;top:730.2px;overflow:visible" width="12" height="12" viewBox="0 0 12 12" fill="none" stroke-linecap="round" stroke-linejoin="round" ><path d="M.6 .6 L10.8 10.8 M10.8 .6 L.6 10.8" stroke="#333" stroke-width="1.5"/></svg>
<span class="t" style="letter-spacing:-0.183px;left:1692.7px;top:729px;">Закрыть</span>
</body></html>
